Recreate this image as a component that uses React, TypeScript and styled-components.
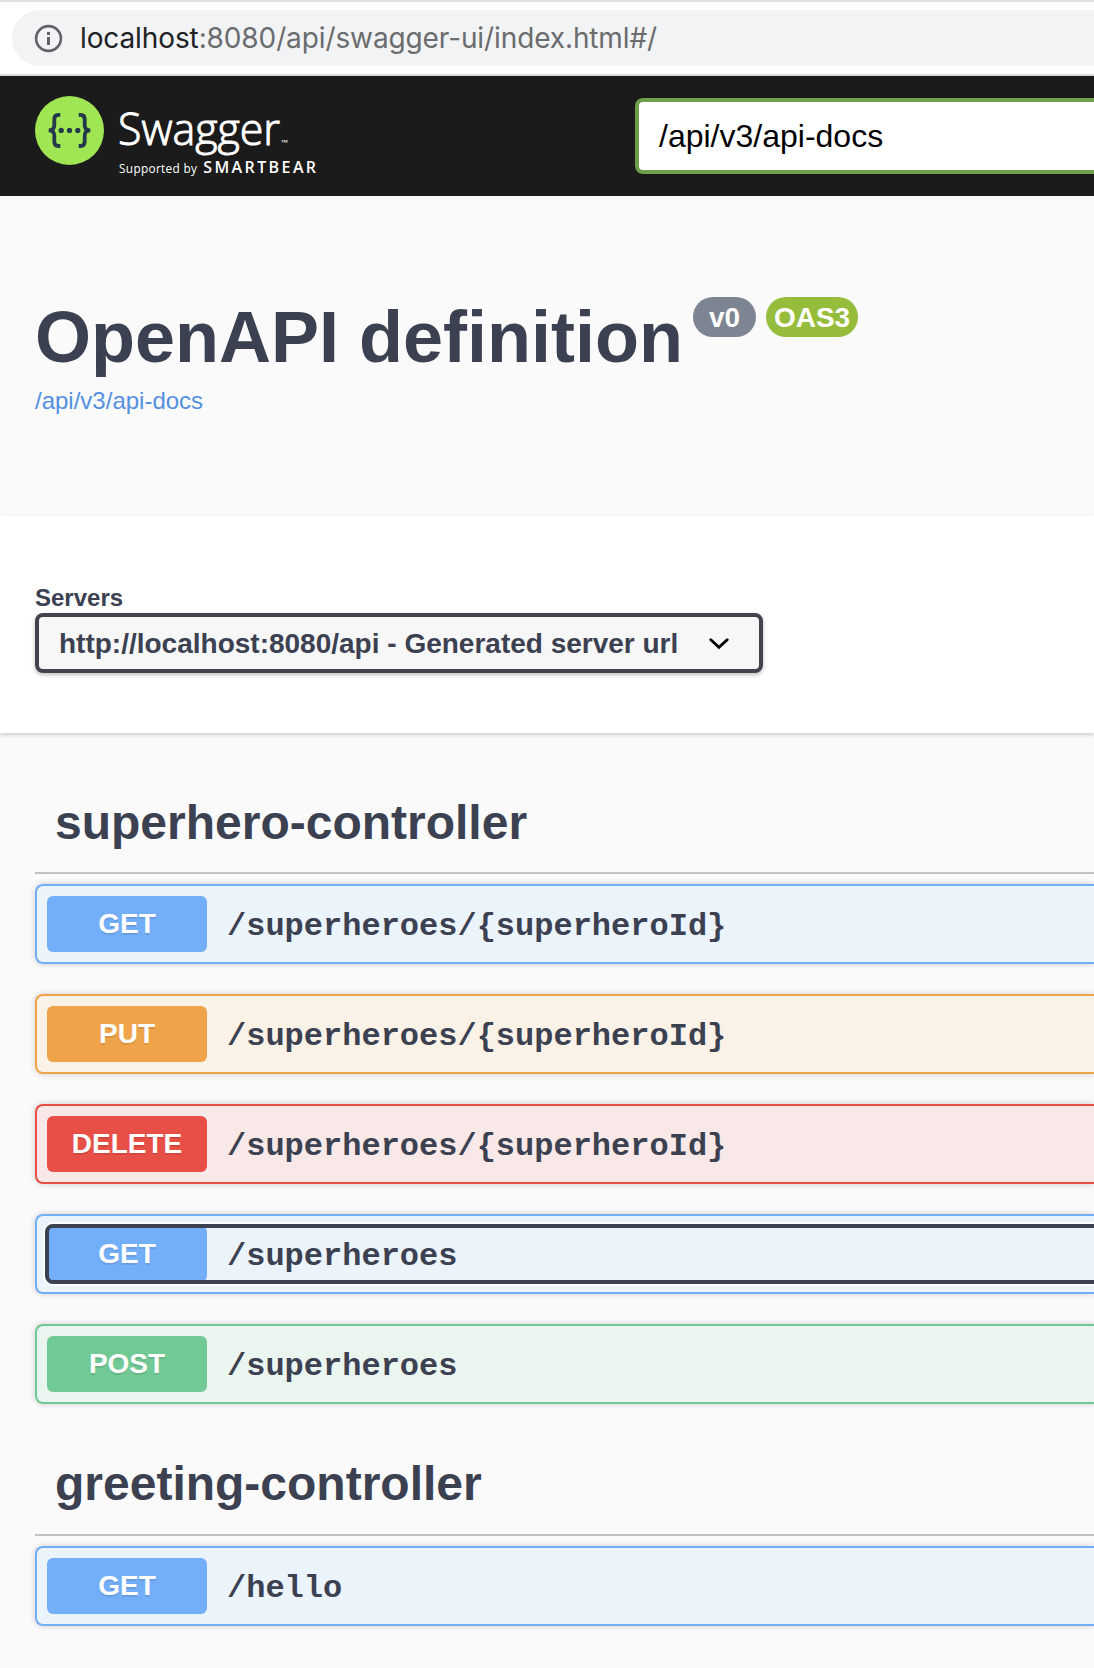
import React from 'react';
import styled, { createGlobalStyle } from 'styled-components';

const GlobalStyle = createGlobalStyle`
  * { box-sizing: border-box; }
  body { margin: 0; background: #fafafa; overflow: hidden; }
`;

const SANS = '"Liberation Sans", Arial, sans-serif';

const Page = styled.div`
  width: 1094px;
  height: 1668px;
  overflow: hidden;
  background: #fafafa;
  color: #3b4151;
  font-family: ${SANS};
`;

const BrowserBar = styled.div`
  height: 76px;
  padding: 8px 0 0 12px;
  border-top: 2px solid #dfdee3;
  border-bottom: 2px solid #dadcda;
  background: #fff;
`;

const AddressField = styled.div`
  display: flex;
  align-items: center;
  gap: 17px;
  height: 56px;
  padding-left: 22px;
  border-radius: 28px 0 0 28px;
  background: #f1f3f4;
`;

const Address = styled.span`
  font: 400 28px/56px Inter, sans-serif;
  letter-spacing: -0.11px;
  color: #6b6c6e;
  white-space: nowrap;
`;

const Host = styled.span`
  color: #202124;
`;

const TopBar = styled.header`
  display: flex;
  justify-content: space-between;
  align-items: center;
  height: 120px;
  padding-left: 35px;
  background: #1b1b1b;
`;

const UrlField = styled.div`
  width: 459px;
  height: 76px;
  padding-left: 20px;
  border: 4px solid #6f9f4b;
  border-right: 0;
  border-radius: 8px 0 0 8px;
  background: #fff;
  color: #000;
  font-size: 32px;
  line-height: 68px;
`;

const Info = styled.section`
  height: 320px;
  padding: 98px 0 0 35px;
`;

const TitleRow = styled.div`
  display: flex;
  align-items: flex-start;
  height: 93px;
`;

const Title = styled.h1`
  width: 658px;
  margin: 0;
  font-size: 72px;
  line-height: 87px;
  font-weight: 700;
  white-space: nowrap;
`;

const Tag = styled.span<{ $color: string; $width: number }>`
  width: ${(p) => p.$width}px;
  height: 40px;
  margin: 3px 10px 0 0;
  border-radius: 20px;
  background: ${(p) => p.$color};
  color: #fff;
  font-size: 28px;
  font-weight: 700;
  line-height: 41px;
  text-align: center;
`;

const DocLink = styled.a`
  display: block;
  color: #5590e0;
  font-size: 24px;
  line-height: 28px;
`;

const Servers = styled.section`
  height: 217px;
  padding: 67px 0 0 35px;
  background: #fff;
  box-shadow: 0 2px 4px rgba(0, 0, 0, 0.18);
`;

const ServersLabel = styled.div`
  height: 30px;
  font-size: 24px;
  font-weight: 700;
  line-height: 30px;
`;

const Select = styled.div`
  display: flex;
  justify-content: space-between;
  align-items: center;
  width: 728px;
  height: 60px;
  padding: 1px 30px 0 20px;
  border: 4px solid #41444e;
  border-radius: 8px;
  background: #f7f7f7;
  box-shadow: 0 2px 4px rgba(0, 0, 0, 0.25);
  font-size: 28px;
  font-weight: 700;
  line-height: 51px;
  white-space: nowrap;
`;

const Group = styled.section<{ $top: number }>`
  padding: ${(p) => p.$top}px 0 0 35px;
`;

const GroupTitle = styled.h2<{ $height: number }>`
  height: ${(p) => p.$height}px;
  margin: 0 0 10px;
  padding-left: 20px;
  border-bottom: 2px solid #c1c1c7;
  font-size: 48px;
  font-weight: 700;
  line-height: 68px;
`;

const Operations = styled.div`
  display: flex;
  flex-direction: column;
  gap: 30px;
`;

const Operation = styled.div<{ $color: string; $tint: string }>`
  height: 80px;
  padding: 10px 0 0 10px;
  border: 2px solid ${(p) => p.$color};
  border-right: 0;
  border-radius: 8px 0 0 8px;
  background: ${(p) => p.$tint};
  box-shadow: 0 0 6px rgba(0, 0, 0, 0.19);
`;

const Summary = styled.div<{ $focused?: boolean }>`
  position: relative;
  display: flex;
  height: 56px;

  &::after {
    content: '';
    display: ${(p) => (p.$focused ? 'block' : 'none')};
    position: absolute;
    inset: -2px -10px -2px -2px;
    border: 4px solid #3b4151;
    border-radius: 8px;
    box-shadow: 0 0 0 2px #fff;
  }
`;

const Method = styled.span<{ $color: string }>`
  width: 160px;
  height: 56px;
  margin-right: 20px;
  border-radius: 6px;
  background: ${(p) => p.$color};
  color: #fff;
  font-size: 28px;
  font-weight: 700;
  line-height: 56px;
  text-align: center;
  text-shadow: 0 2px 0 rgba(0, 0, 0, 0.1);
`;

const Path = styled.span`
  font: 700 32px/61px "Liberation Mono", "Courier New", monospace;
  white-space: nowrap;
`;

const METHODS = {
  GET: { color: '#73aef9', tint: '#ebf3fb' },
  PUT: { color: '#efa44a', tint: '#faf1e7' },
  DELETE: { color: '#e84f47', tint: '#f8e8e7' },
  POST: { color: '#71c995', tint: '#ebf5ef' },
};

type Op = { method: keyof typeof METHODS; path: string; focused?: boolean };

const GROUPS: { name: string; top: number; titleHeight: number; ops: Op[] }[] = [
  {
    name: 'superhero-controller',
    top: 56,
    titleHeight: 85,
    ops: [
      { method: 'GET', path: '/superheroes/{superheroId}' },
      { method: 'PUT', path: '/superheroes/{superheroId}' },
      { method: 'DELETE', path: '/superheroes/{superheroId}' },
      { method: 'GET', path: '/superheroes', focused: true },
      { method: 'POST', path: '/superheroes' },
    ],
  },
  {
    name: 'greeting-controller',
    top: 46,
    titleHeight: 86,
    ops: [{ method: 'GET', path: '/hello' }],
  },
];

const InfoIcon = () => (
  <svg width="29" height="29" viewBox="0 0 29 29">
    <circle cx="14.5" cy="14.5" r="12.4" fill="none" stroke="#5f6368" strokeWidth="2.6" />
    <path d="M13 8h3v3h-3zM13 13h3v8h-3z" fill="#5f6368" />
  </svg>
);

const SwaggerLogo = () => (
  <svg width="290" height="90" viewBox="35 91 290 90">
    <circle cx="69.5" cy="130.5" r="34.5" fill="#a0e553" />
    <g fill="none" stroke="#23394a" strokeWidth="3.8">
      <path d="M60.3 114.8h-2q-4 0-4 4.4v6q0 5.2-5.6 5.2q5.6 0 5.6 5.2v6q0 4.4 4 4.4h2" />
      <path d="M78.7 114.8h2q4 0 4 4.4v6q0 5.2 5.6 5.2q-5.6 0-5.6 5.2v6q0 4.4-4 4.4h-2" />
    </g>
    <g fill="#23394a">
      <circle cx="61.2" cy="130.4" r="2.6" />
      <circle cx="69.5" cy="130.4" r="2.6" />
      <circle cx="77.8" cy="130.4" r="2.6" />
    </g>
    <g fill="#fff" fontFamily='"Open Sans", sans-serif'>
      <text x="118" y="144.5" fontSize="44" fontWeight="300" stroke="#fff" strokeWidth="1" textLength="162" lengthAdjust="spacingAndGlyphs">
        Swagger
      </text>
      <text x="281" y="145" fontSize="7" textLength="7" lengthAdjust="spacingAndGlyphs">
        ™
      </text>
      <text x="119" y="172.5" fontSize="11.8" textLength="78">
        Supported by
      </text>
      <text x="203.2" y="172.5" fontSize="16" fontWeight="600" textLength="115.5" lengthAdjust="spacing" letterSpacing="2.6">
        SMARTBEAR
      </text>
    </g>
  </svg>
);

const Chevron = () => (
  <svg width="20" height="12" viewBox="0 0 20 12">
    <path d="M1.8 1.8L10 9.3L18.2 1.8" fill="none" stroke="#000" strokeWidth="2.8" strokeLinecap="round" />
  </svg>
);

export default function App() {
  return (
    <Page>
      <GlobalStyle />
      <BrowserBar>
        <AddressField>
          <InfoIcon />
          <Address>
            <Host>localhost</Host>:8080/api/swagger-ui/index.html#/
          </Address>
        </AddressField>
      </BrowserBar>
      <TopBar>
        <SwaggerLogo />
        <UrlField>/api/v3/api-docs</UrlField>
      </TopBar>
      <Info>
        <TitleRow>
          <Title>OpenAPI definition</Title>
          <Tag $color="#7d8492" $width={63}>v0</Tag>
          <Tag $color="#95bd3b" $width={92}>OAS3</Tag>
        </TitleRow>
        <DocLink>/api/v3/api-docs</DocLink>
      </Info>
      <Servers>
        <ServersLabel>Servers</ServersLabel>
        <Select>
          http://localhost:8080/api - Generated server url
          <Chevron />
        </Select>
      </Servers>
      {GROUPS.map((group) => (
        <Group key={group.name} $top={group.top}>
          <GroupTitle $height={group.titleHeight}>{group.name}</GroupTitle>
          <Operations>
            {group.ops.map((op, i) => (
              <Operation key={i} $color={METHODS[op.method].color} $tint={METHODS[op.method].tint}>
                <Summary $focused={op.focused}>
                  <Method $color={METHODS[op.method].color}>{op.method}</Method>
                  <Path>{op.path}</Path>
                </Summary>
              </Operation>
            ))}
          </Operations>
        </Group>
      ))}
    </Page>
  );
}
